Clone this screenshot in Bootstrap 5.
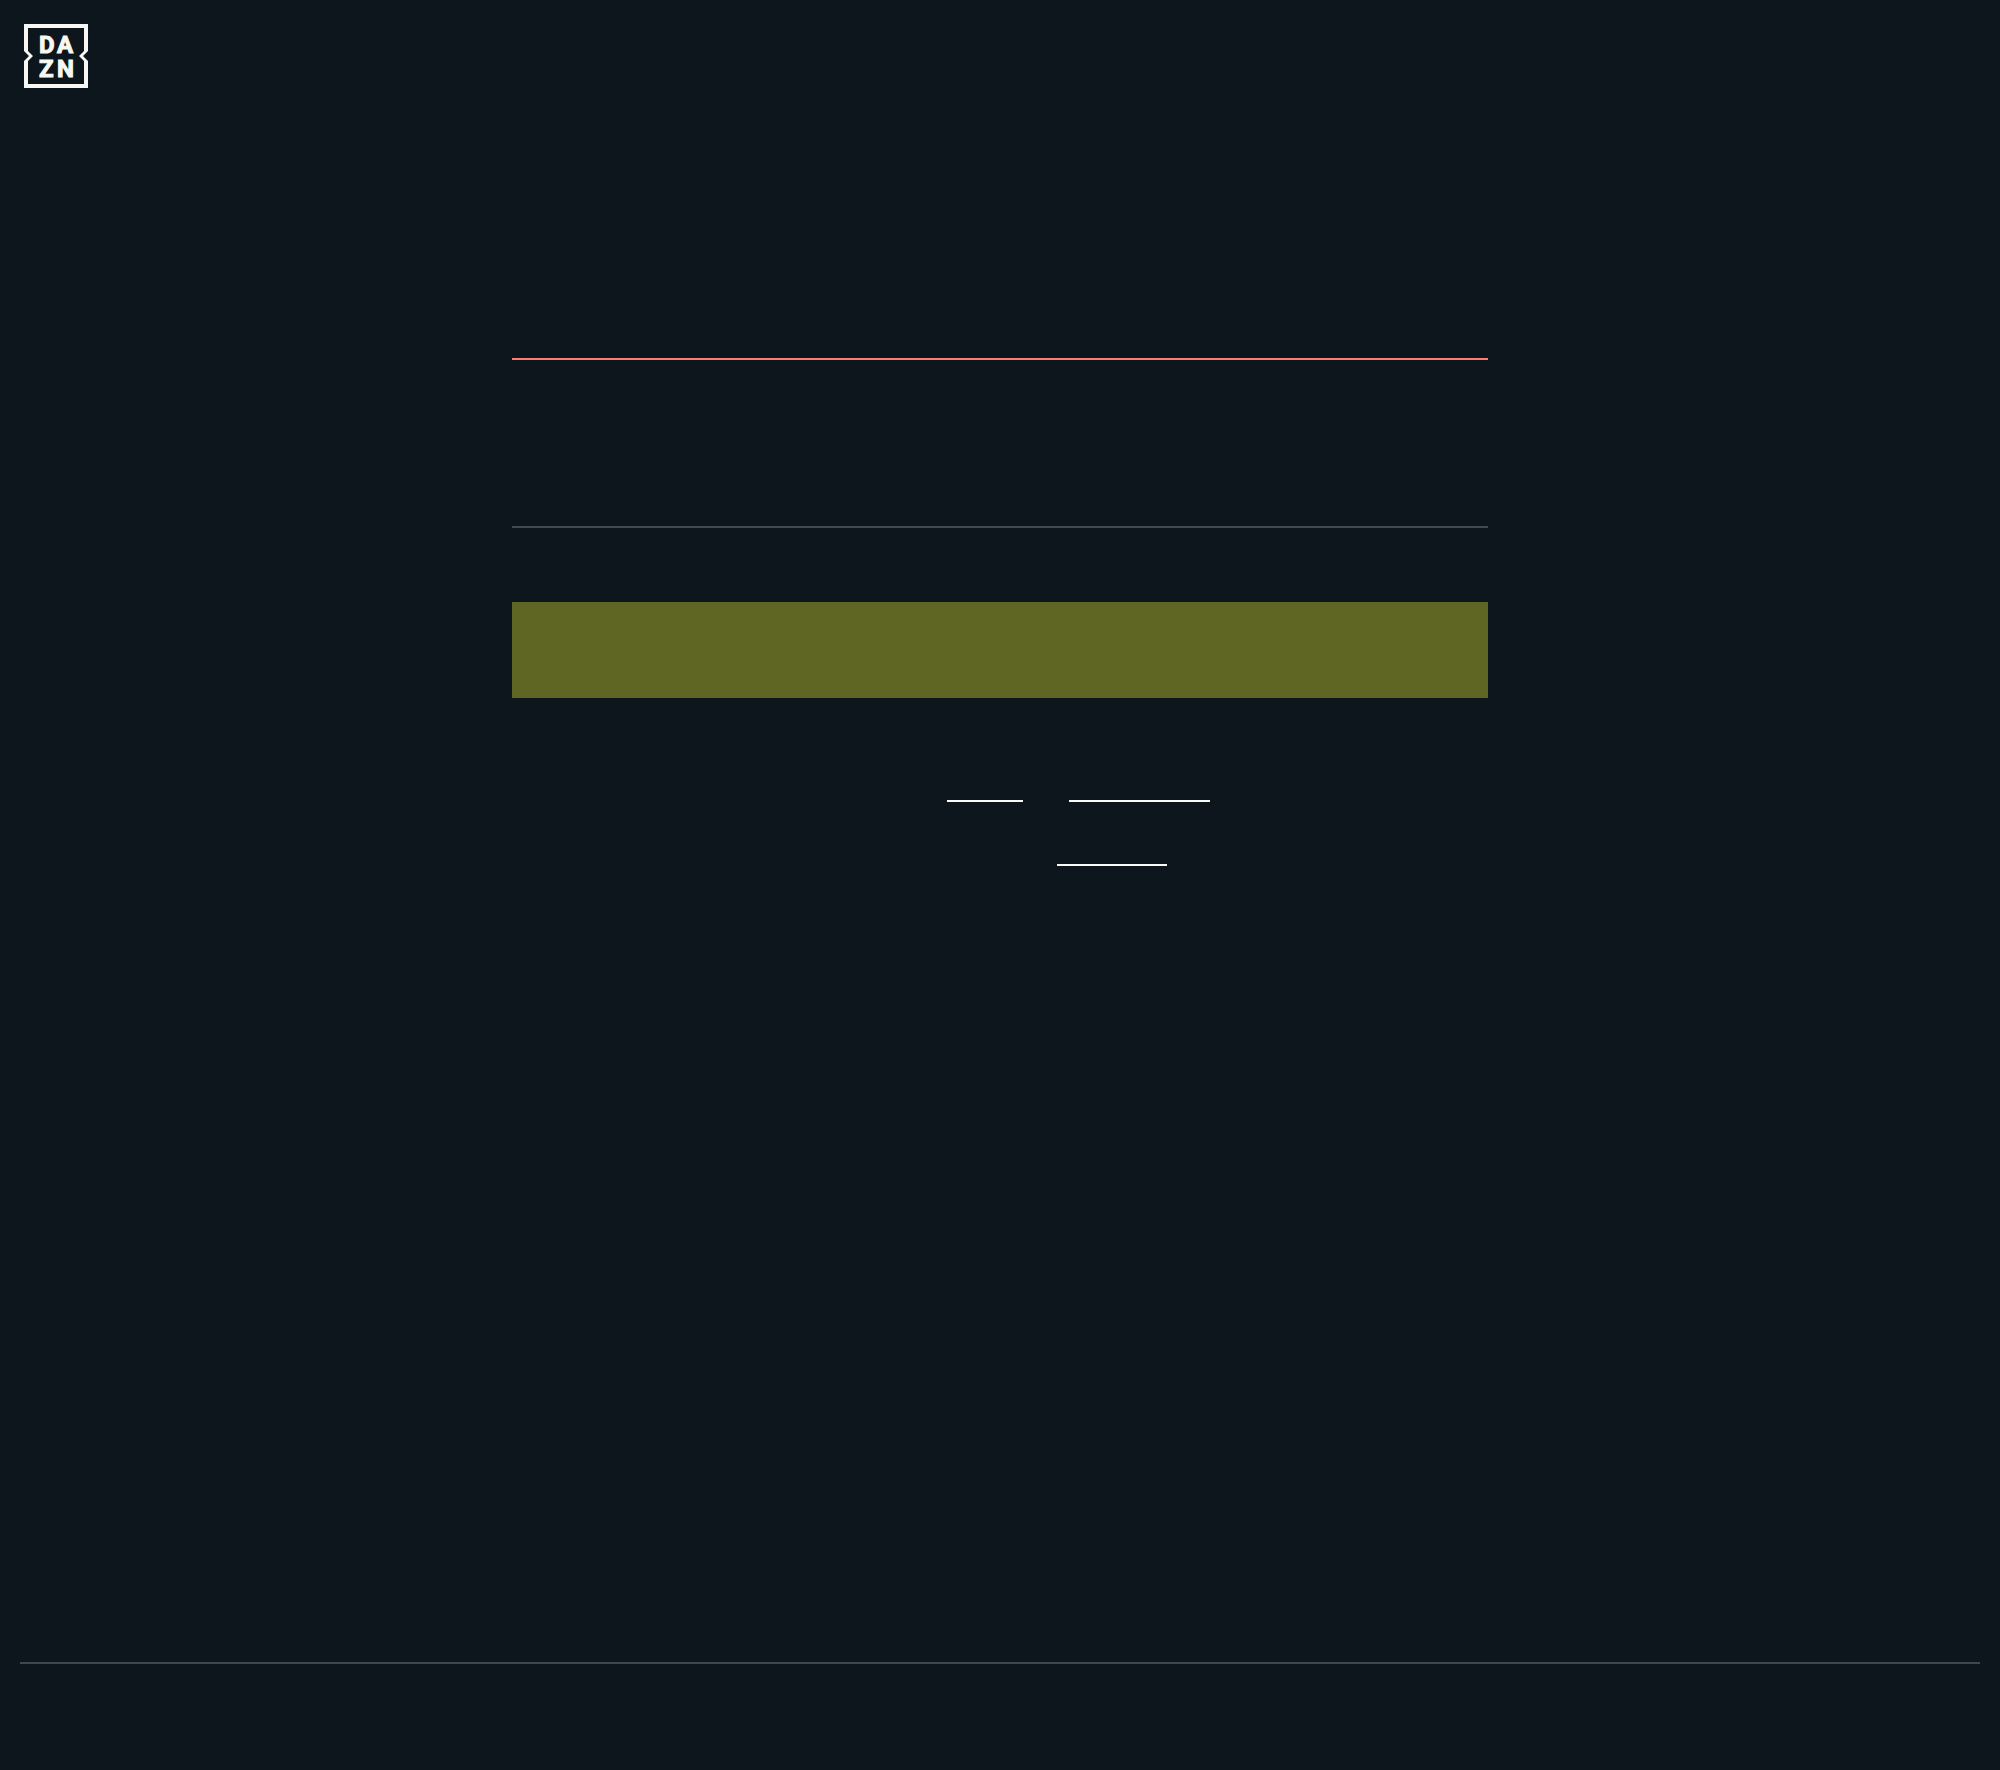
<!DOCTYPE html>
<html lang="en">
<head>
<meta charset="utf-8">
<meta name="viewport" content="width=device-width, initial-scale=1">
<title>DAZN</title>
<link rel="stylesheet" href="https://cdn.jsdelivr.net/npm/bootstrap@5.3.0/dist/css/bootstrap.min.css">
<style>
  body { background: #0c161c; color: #f9fafa; font-family: Roboto, "Liberation Sans", sans-serif; }
  .site-header { padding: 24px; }
  .brand-logo { width: 64px; height: 64px; }
  .brand-logo text { font: 700 24px Roboto, "Liberation Sans", sans-serif; fill: #f7f8f3; stroke: #f7f8f3; stroke-width: 1px; }
  .auth-form { max-width: 1000px; padding: 176px 12px 0; }
  .auth-field { height: 72px; padding: 0; background: transparent; color: #f9fafa; border: 0; border-bottom: 2px solid #424a50; border-radius: 0; }
  .auth-field:focus { background: transparent; color: #f9fafa; box-shadow: none; }
  .auth-field.field-error { border-bottom-color: #ff7c70; }
  .field-group + .field-group { margin-top: 96px; }
  .submit-btn { height: 96px; margin-top: 74px; background: #5f6623; border: 0; border-radius: 0; }
  .legal-links { padding-top: 72px; }
  .legal-line { height: 32px; }
  .legal-line + .legal-line { margin-top: 32px; }
  .legal-link { height: 32px; border-bottom: 2px solid #f9fafa; }
  .lead-terms { width: 157px; }
  .lead-privacy { width: 46px; }
  .lead-signup { width: 224px; }
  .link-terms { width: 76px; }
  .link-privacy { width: 141px; }
  .link-signup { width: 110px; }
  .site-footer { margin: 0 20px; height: 108px; border-top: 2px solid #3d474d; }
</style>
<script defer src="https://cdn.jsdelivr.net/npm/bootstrap@5.3.0/dist/js/bootstrap.bundle.min.js"></script>
</head>
<body class="d-flex flex-column min-vh-100">
<header class="site-header d-flex">
  <a href="#" class="d-flex" aria-label="DAZN">
    <svg class="brand-logo" viewBox="0 0 64 64" aria-hidden="true">
      <path fill="#f7f8f3" d="M0 0H64V27L59 32L64 37V64H0V37L5 32L0 27ZM4 4V27L9 32L4 37V60H60V37L55 32L60 27V4Z" fill-rule="evenodd"/>
      <text x="15" y="29">D</text>
      <text x="33" y="29">A</text>
      <text x="15" y="53">Z</text>
      <text x="33" y="53">N</text>
    </svg>
  </a>
</header>
<main class="flex-grow-1">
  <form class="auth-form mx-auto">
    <div class="field-group">
      <input class="auth-field field-error form-control" type="email" aria-label="Email">
    </div>
    <div class="field-group">
      <input class="auth-field form-control" type="password" aria-label="Password">
    </div>
    <button class="submit-btn btn w-100 d-block" type="submit" aria-label="Continue"></button>
    <div class="legal-links">
      <div class="legal-line d-flex justify-content-center">
        <span class="lead-terms"></span>
        <a class="legal-link link-terms" href="#" aria-label="Terms"></a>
        <span class="lead-privacy"></span>
        <a class="legal-link link-privacy" href="#" aria-label="Privacy"></a>
      </div>
      <div class="legal-line d-flex justify-content-center">
        <span class="lead-signup"></span>
        <a class="legal-link link-signup" href="#" aria-label="Sign up"></a>
      </div>
    </div>
  </form>
</main>
<footer class="site-footer"></footer>
</body>
</html>
